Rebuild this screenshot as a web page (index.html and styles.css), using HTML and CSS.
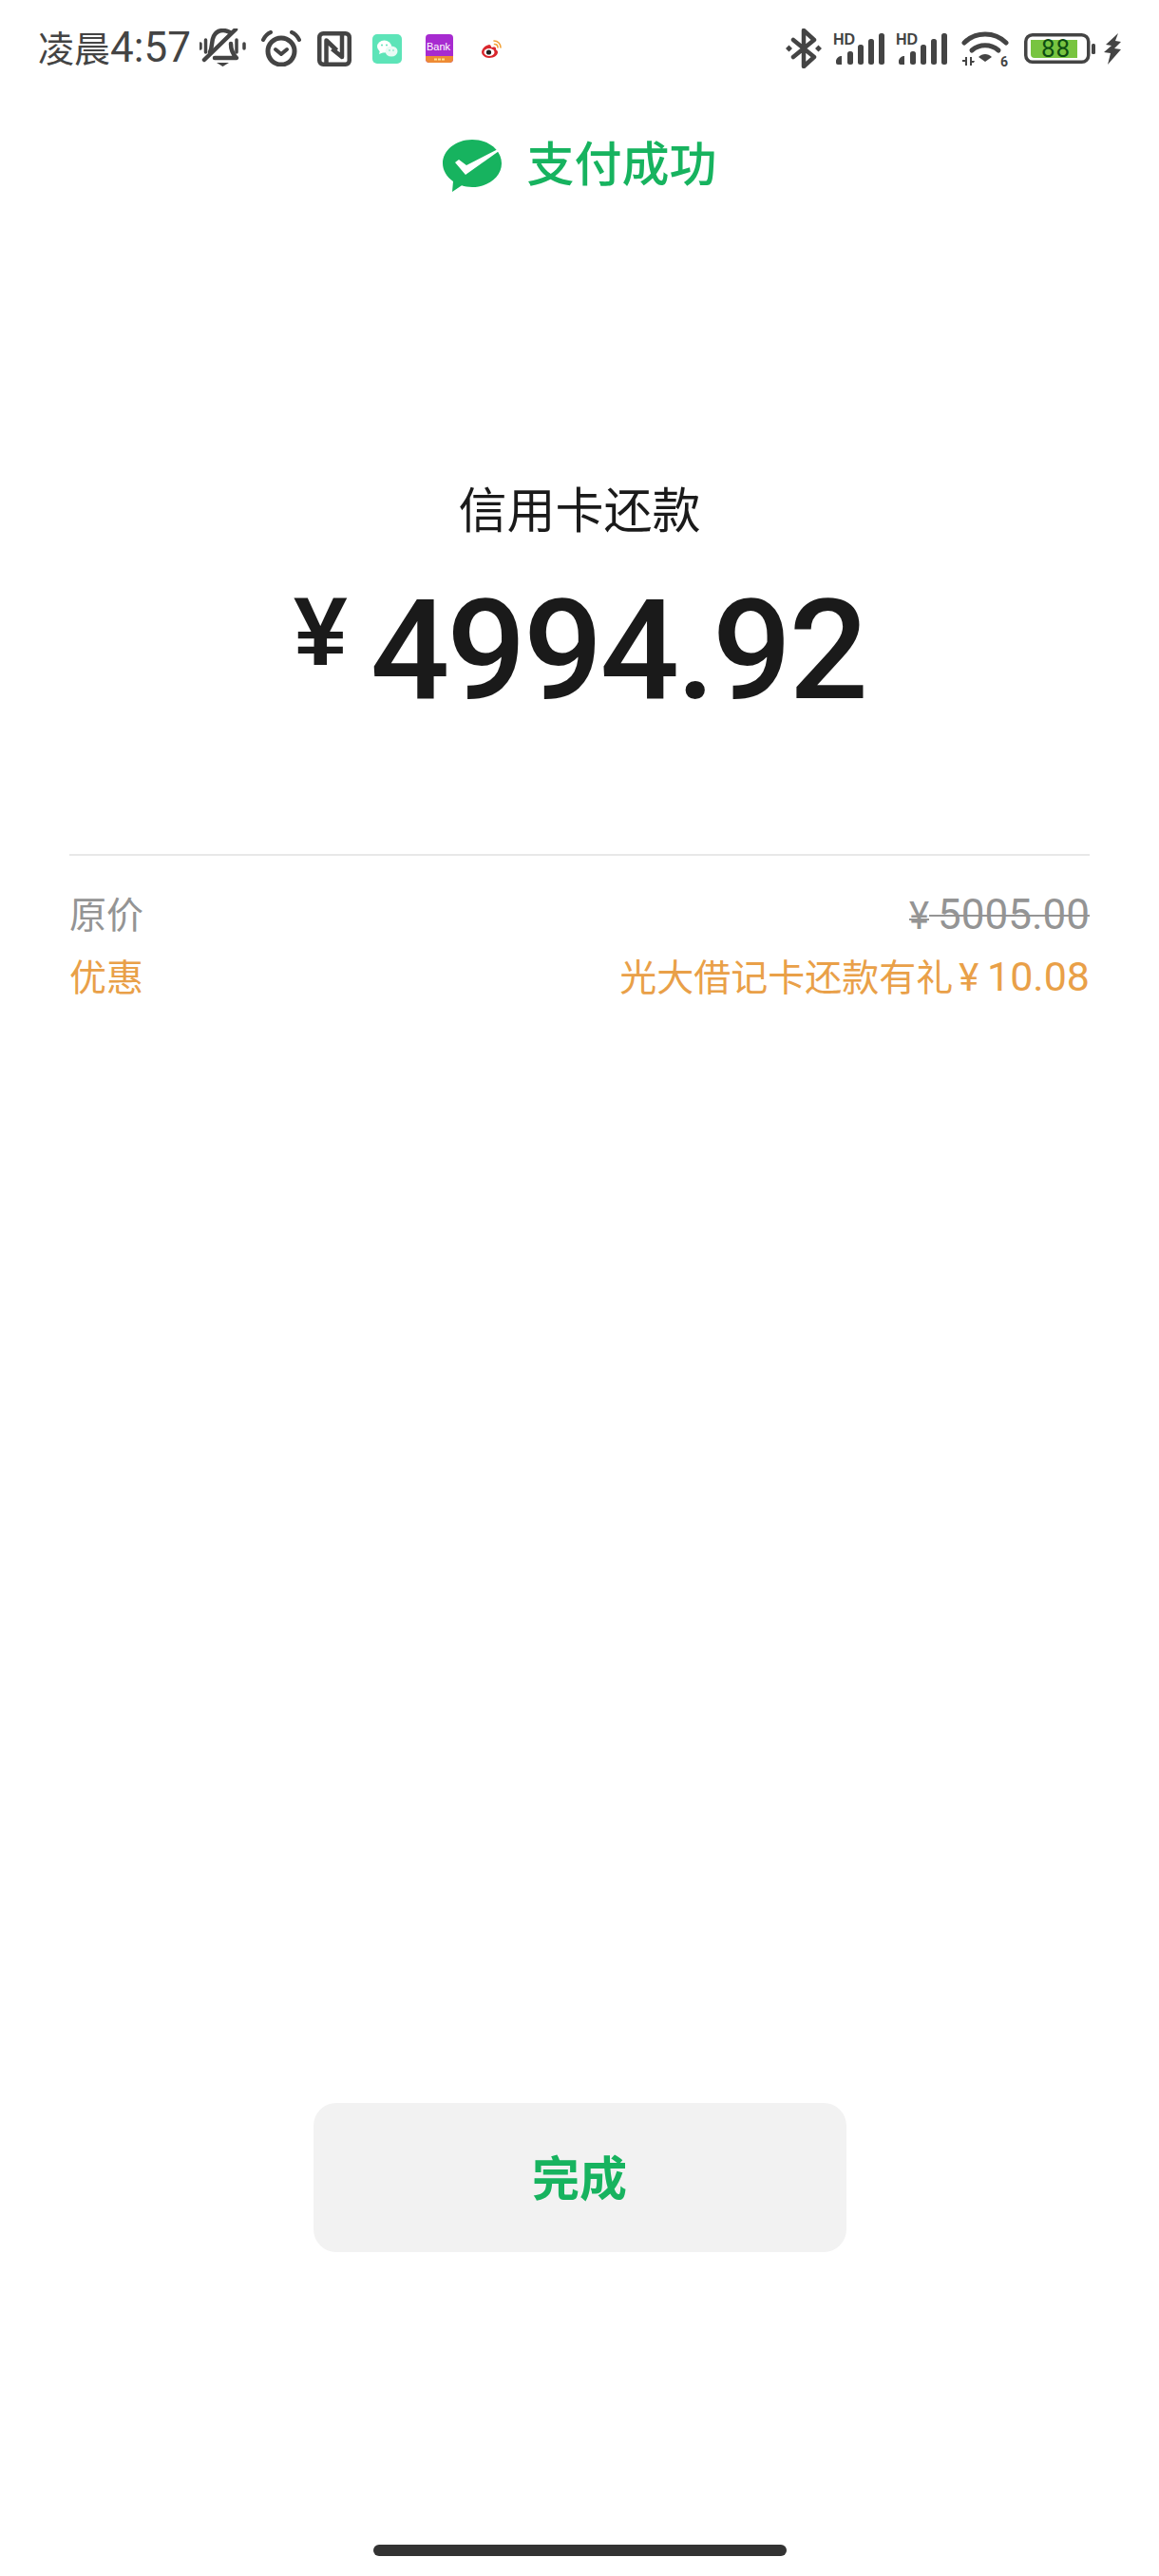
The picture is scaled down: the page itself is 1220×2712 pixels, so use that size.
FILE: index.html
```html
<!DOCTYPE html>
<html lang="zh-CN">
  <head>
    <meta charset="UTF-8" />
    <meta name="viewport" content="width=device-width, initial-scale=1.0" />
    <title>支付成功</title>
    <link rel="stylesheet" href="styles.css">
  </head>
  <body>
    <div class="status">
      <div class="status-left">
        <span class="clock"><span class="clock-cn">凌晨</span>4:57</span>
        <svg class="ic-bell" width="49" height="42" viewBox="0 0 49 42">
          <g fill="none" stroke="#444" stroke-linecap="round" stroke-linejoin="round">
            <path d="M1 16v5M6.500 12v13M39 12v13M47 16v5" stroke-width="3.500"/>
            <path d="M11 25c3-6 1-11 4-17 2-4 6-6 10-6 3 0 5 1 7 2" stroke-width="4.500"/>
            <path d="M33 16c0 7 2 11 6 15H16" stroke-width="4.500"/>
            <path d="M38 1 5 33" stroke-width="4.500"/>
          </g>
          <path d="M18 36h13l-6.500 4z" fill="#444"/>
        </svg>
        <svg class="ic-alarm" width="42" height="38" viewBox="0 0 42 38">
          <g fill="none" stroke="#444" stroke-linecap="round" stroke-linejoin="round">
            <circle cx="21" cy="22" r="14" stroke-width="5"/>
            <path d="M15 20l6 5 6-5" stroke-width="4"/>
            <path d="M2 10c2-4 5-7 8-8M40 10c-2-4-5-7-8-8" stroke-width="4"/>
          </g>
        </svg>
        <svg class="ic-nfc" width="36" height="37" viewBox="0 0 36 37">
          <g fill="none" stroke="#444" stroke-width="4.500" stroke-linejoin="round">
            <rect x="2.250" y="2.250" width="31.500" height="32.500" rx="4"/>
            <path d="M9.500 35V9.500L20.500 20"/>
            <path d="M26 2v25L15.500 18.500"/>
          </g>
        </svg>
        <svg class="ic-app ic-wechat" width="31" height="31" viewBox="0 0 31 31">
          <rect width="31" height="31" rx="5" fill="#5de4b8"/>
          <ellipse cx="12.500" cy="13" rx="7.500" ry="6.500" fill="#fff"/>
          <path d="M8 17l-1 4 5-2z" fill="#fff"/>
          <ellipse cx="20" cy="18" rx="6.500" ry="5.500" fill="#eafbf5"/>
          <circle cx="10" cy="11.500" r="1" fill="#5de4b8"/>
          <circle cx="15" cy="11.500" r="1" fill="#5de4b8"/>
          <circle cx="18" cy="17" r=".8" fill="#5de4b8"/>
          <circle cx="22" cy="17" r=".8" fill="#5de4b8"/>
        </svg>
        <svg class="ic-app ic-bank" width="29" height="30" viewBox="0 0 29 30">
          <rect width="29" height="30" rx="4" fill="#a72bd0"/>
          <path d="M0 23h29v3a4 4 0 0 1-4 4H4a4 4 0 0 1-4-4z" fill="#ee8b35"/>
          <text class="bank-text" x="1" y="17">Bank</text>
          <path d="M9 26.500h11" stroke="#fbe28a" stroke-width="2" stroke-dasharray="3 1"/>
        </svg>
        <svg class="ic-app ic-weibo" width="21" height="19" viewBox="0 0 21 19">
          <path d="M8 5C3 6 0 10 0 13c0 3 4 6 8 6 5 0 9-3 9-6 0-2-2-2.500-2-3 .5-2-1-3-4-2-1 .3-1-3-3-3z" fill="#d9262c"/>
          <ellipse cx="8" cy="13" rx="5.500" ry="4" fill="#fff"/>
          <circle cx="7.500" cy="13" r="2.600" fill="#222"/>
          <path d="M13 1c4 0 7 3 7 7M13.500 4.500c2 0 3.500 1.500 3.500 3.500" fill="none" stroke="#f2a33a" stroke-width="1.600" stroke-linecap="round"/>
        </svg>
      </div>
      <div class="status-right">
        <svg class="ic-bt" width="38" height="42" viewBox="0 0 38 42">
          <g fill="none" stroke="#444" stroke-width="4.500" stroke-linecap="round" stroke-linejoin="round">
            <path d="M8 12l22 18-11 10V2l11 10L8 30"/>
          </g>
          <path d="M3.500 17.500 7 21l-3.500 3.500L0 21zM34.500 17.500 38 21l-3.500 3.500L31 21z" fill="#444"/>
        </svg>
        <svg class="ic-signal" width="54" height="34" viewBox="0 0 54 34">
          <text class="hd-text" x="0" y="12.500">HD</text>
          <g fill="#444">
            <path d="M3 30c0-2 3-5 5-5h1v9H5a2 2 0 0 1-2-2z"/>
            <rect x="15" y="20" width="6" height="14" rx="2.500"/>
            <rect x="26" y="13" width="6" height="21" rx="2.500"/>
            <rect x="37" y="7" width="6" height="27" rx="2.500"/>
            <rect x="48" y="1" width="6" height="33" rx="2.500"/>
          </g>
        </svg>
        <svg class="ic-signal" width="54" height="34" viewBox="0 0 54 34">
          <text class="hd-text" x="0" y="12.500">HD</text>
          <g fill="#444">
            <path d="M3 30c0-2 3-5 5-5h1v9H5a2 2 0 0 1-2-2z"/>
            <rect x="15" y="20" width="6" height="14" rx="2.500"/>
            <rect x="26" y="13" width="6" height="21" rx="2.500"/>
            <rect x="37" y="7" width="6" height="27" rx="2.500"/>
            <rect x="48" y="1" width="6" height="33" rx="2.500"/>
          </g>
        </svg>
        <svg class="ic-wifi" width="50" height="37" viewBox="0 0 50 37">
          <g fill="none" stroke="#444" stroke-width="5" stroke-linecap="round">
            <path d="M3 12C15 0 35 0 47 12"/>
            <path d="M11 20c8-7 20-7 28 0"/>
          </g>
          <path d="M18 27c4-4 10-4 14 0l-7 5z" fill="#444"/>
          <path d="M1 30h3v-3h2v9H4v-4H1zM9 27h2v4h3l-1 2h-2v3H9z" fill="#444"/>
          <text class="wifi-six" x="41" y="37">6</text>
        </svg>
        <svg class="ic-batt" width="75" height="32" viewBox="0 0 75 32">
          <rect x="1.750" y="1.750" width="66" height="28.500" rx="7" fill="#fff" stroke="#444" stroke-width="3.500"/>
          <path d="M7 7h49v19H11a4 4 0 0 1-4-4z" fill="#78c440"/>
          <text class="batt-text" x="18" y="25">88</text>
          <rect x="71" y="11" width="4" height="11" rx="1.500" fill="#444"/>
        </svg>
        <svg class="ic-bolt" width="19" height="33" viewBox="0 0 19 33">
          <path d="M15 0 2 12l6 1-8 7 7 1-3 12L18 17l-7-1 7-7-6-1z" fill="#444"/>
        </svg>
      </div>
    </div>

    <div class="pay-head">
      <svg class="pay-logo" width="62" height="55" viewBox="0 0 62 55">
        <path d="M31 0c17 0 31 11 31 25S48 50 31 50c-4 0-8-.6-11-1.700L10 55l1-11C4 39 0 32 0 25 0 11 14 0 31 0z" fill="#17b35f"/>
        <path d="M13 24l4-3 8 6 37-19v2L24 37z" fill="#fff"/>
      </svg>
      <span class="pay-title">支付成功</span>
    </div>

    <div class="bill-name">信用卡还款</div>
    <div class="amount"><span class="amount-sign">¥</span><span class="amount-num">4994.92</span></div>

    <div class="details">
      <div class="row row-grey">
        <span class="cn">原价</span>
        <span class="num price-old"><span class="yen">¥</span>&#8201;5005.00</span>
      </div>
      <div class="row row-orange">
        <span class="cn">优惠</span>
        <span><span class="cn">光大借记卡还款有礼</span><span class="num num-sm"><span class="yen">¥</span>&#8201;10.08</span></span>
      </div>
    </div>

    <div class="spacer"></div>

    <button class="done">完成</button>
    <div class="home-bar"></div>
  </body>
</html>
```

FILE: styles.css
```css
body {
  font-family: Roboto, "Noto Sans CJK SC", sans-serif;
  margin: 0;
  padding: 0;
  width: 1220px;
  height: 2712px;
  display: flex;
  flex-direction: column;
  align-items: center;
  background-color: #fff;
  color: #1a1a1a;
  overflow: hidden;
}

svg {
  display: block;
  flex: none;
}

.status {
  width: 100%;
  height: 102px;
  box-sizing: border-box;
  padding: 0 39px 0 40px;
  display: flex;
  align-items: center;
  justify-content: space-between;
  color: #444;
}

.status-left,
.status-right {
  display: flex;
  align-items: center;
}

.clock {
  font-size: 44px;
  line-height: 50px;
  width: 164px;
  white-space: nowrap;
}

.clock-cn {
  font-size: 38px;
}

.ic-bell { margin-left: 6px; }
.ic-alarm { margin-left: 16px; }
.ic-nfc { margin-left: 17px; }
.ic-wechat { margin-left: 22px; }
.ic-bank { margin-left: 25px; }
.ic-weibo { margin-left: 30px; }

.bank-text {
  font-family: "Liberation Sans", sans-serif;
  font-size: 11px;
  fill: #fff;
}

.ic-signal { margin-left: 12px; }
.ic-wifi { margin-left: 15px; }
.ic-batt { margin-left: 16px; }
.ic-bolt { margin-left: 9px; }

.hd-text {
  font-family: "Liberation Sans", sans-serif;
  font-size: 16px;
  font-weight: 700;
  fill: #444;
}

.wifi-six {
  font-family: Roboto, sans-serif;
  font-size: 14px;
  font-weight: 700;
  fill: #444;
}

.batt-text {
  font-family: Roboto, sans-serif;
  font-size: 26px;
  font-weight: 400;
  letter-spacing: 1px;
  fill: #0d4d12;
}

.pay-head {
  margin-top: 44px;
  height: 56px;
  display: flex;
  align-items: center;
  gap: 27px;
}

.pay-title {
  font-size: 50px;
  font-weight: 500;
  line-height: 58px;
  color: #17b35f;
}

.bill-name {
  margin-top: 307px;
  font-size: 51px;
  line-height: 60px;
  color: #1a1a1a;
}

.amount {
  margin-top: 41px;
  height: 150px;
  display: flex;
  align-items: flex-start;
  gap: 24px;
}

.amount-sign {
  font-family: "Liberation Sans", sans-serif;
  font-size: 102px;
  font-weight: 700;
  line-height: 110px;
}

.amount-num {
  font-size: 147px;
  font-weight: 500;
  line-height: 150px;
  letter-spacing: -3px;
}

.details {
  width: 1074px;
  margin-top: 139px;
  padding-top: 26px;
  border-top: 2px solid #e8e8e8;
}

.row {
  height: 66px;
  display: flex;
  align-items: center;
  justify-content: space-between;
  font-size: 39px;
}

.row-grey {
  color: #949494;
}

.row-orange {
  color: #e9a048;
}

.num {
  font-size: 44px;
}

.num-sm {
  font-size: 43px;
  margin-left: 6px;
}

.yen {
  font-size: 40px;
}

.price-old {
  margin-top: 6px;
  text-decoration: line-through;
  text-decoration-thickness: 2px;
}

.spacer {
  flex: 1;
}

.done {
  width: 561px;
  height: 157px;
  padding-bottom: 6px;
  border: none;
  border-radius: 24px;
  background-color: #f2f2f2;
  color: #17b35f;
  font-family: inherit;
  font-size: 50px;
  font-weight: 700;
}

.home-bar {
  width: 435px;
  height: 12px;
  margin-top: 308px;
  margin-bottom: 21px;
  border-radius: 6px;
  background-color: #333;
}
```
